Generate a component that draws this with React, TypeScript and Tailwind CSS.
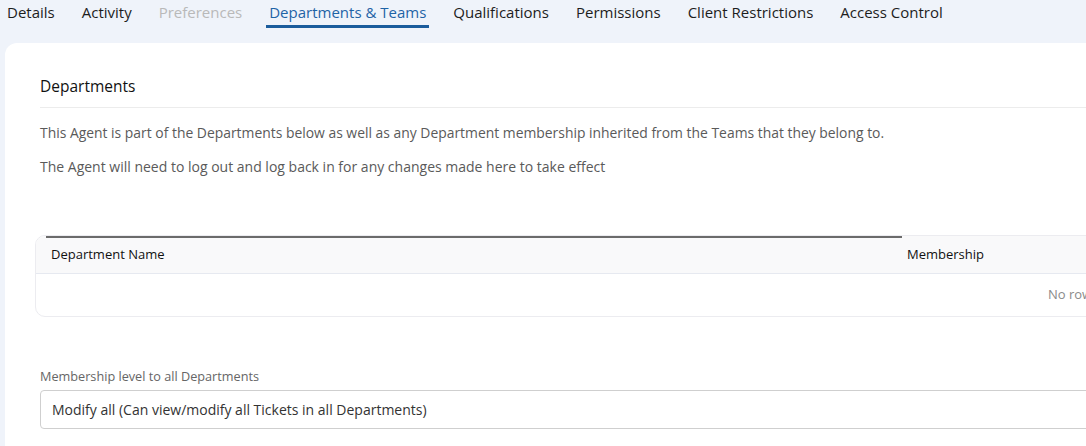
import React from "react";

const tabs = [
  { label: "Details" },
  { label: "Activity" },
  { label: "Preferences", disabled: true },
  { label: "Departments & Teams", active: true },
  { label: "Qualifications" },
  { label: "Permissions" },
  { label: "Client Restrictions" },
  { label: "Access Control" },
];

export default function App() {
  return (
    <div
      className="h-screen w-full overflow-hidden bg-[#eff3fa]"
      style={{ fontFamily: '"Open Sans", "Liberation Sans", sans-serif' }}
    >
      {/* Tabs */}
      <div className="flex h-[28px] items-start gap-[21px] pl-[4px]">
        {tabs.map((tab) => (
          <div
            key={tab.label}
            className={`whitespace-nowrap px-[3px] pt-[2px] text-[15px] leading-[20px] ${
              tab.active
                ? "border-b-[3px] border-[#1b5c9c] pb-[3px] text-[#1f63a6]"
                : tab.disabled
                ? "text-[#b9b9b9]"
                : "text-[#1d1d1d]"
            }`}
          >
            {tab.label}
          </div>
        ))}
      </div>

      {/* Card */}
      <div className="ml-[5px] mt-[15px] w-[1200px] rounded-tl-[12px] bg-white pb-[40px] pl-[30px] pt-[33px]">
        <div className="pl-[5px]">
          <div className="border-b border-[#ececec] pb-[11px] text-[15.5px] leading-[20px] text-[#111]">
            Departments
          </div>
          <p className="mt-[15px] whitespace-nowrap text-[13.9px] leading-[20px] text-[#5a5a5a]">
            This Agent is part of the Departments below as well as any Department membership
            inherited from the Teams that they belong to.
          </p>
          <p className="mt-[14px] whitespace-nowrap text-[14px] leading-[20px] text-[#5a5a5a]">
            The Agent will need to log out and log back in for any changes made here to take effect
          </p>
        </div>

        {/* Table */}
        <div className="mt-[58px] overflow-hidden rounded-tl-[10px] rounded-bl-[10px] border border-[#ececf0]">
          <div className="relative flex h-[38px] items-center border-b border-[#e6e9f0] bg-[#f9f9fa] pl-[10px] text-[13px] text-[#111]">
            <div className="absolute left-[10px] top-0 h-[2px] w-[856px] bg-[#6b6b6b]" />
            <div className="w-[856px] pl-[5px]">Department Name</div>
            <div className="pl-[5px]">Membership</div>
          </div>
          <div className="flex h-[42px] items-center pl-[1012px] text-[13px] text-[#8a8a8a]">
            No rows
          </div>
        </div>

        {/* Membership level */}
        <div className="pl-[5px]">
          <div className="mt-[51px] text-[12.7px] leading-[16px] text-[#666]">
            Membership level to all Departments
          </div>
          <div className="mt-[6px] flex h-[39px] items-center rounded-[4px] border border-[#cfcfcf] pl-[11px] text-[14px] text-[#333]">
            Modify all (Can view/modify all Tickets in all Departments)
          </div>
        </div>
      </div>
    </div>
  );
}
